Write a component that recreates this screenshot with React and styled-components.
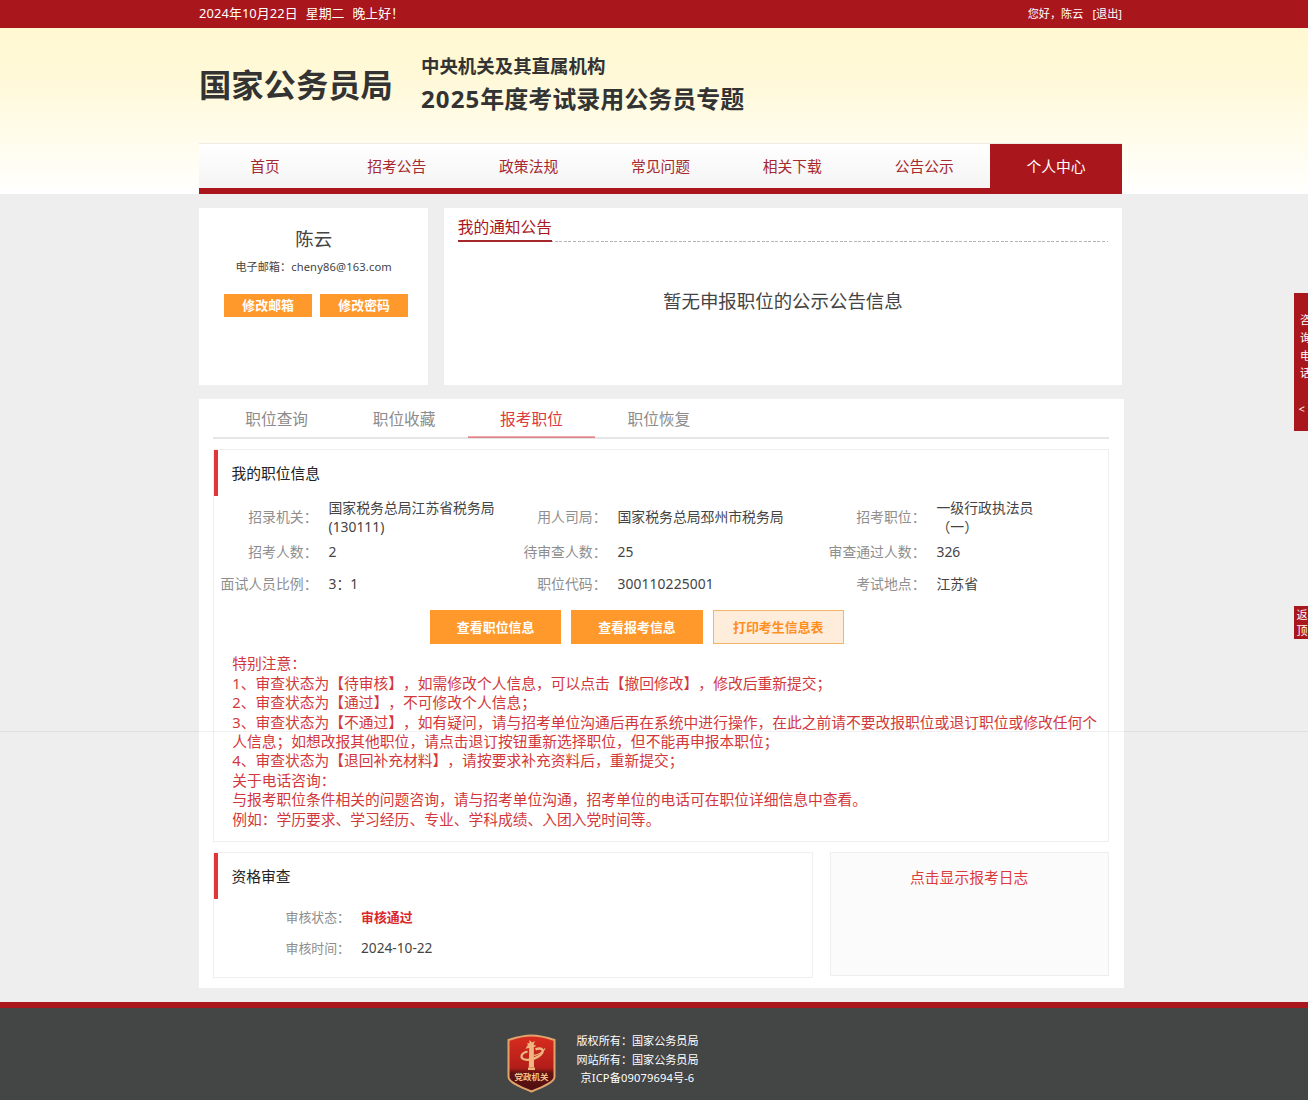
import React from "react";
import styled, { createGlobalStyle, css } from "styled-components";

const red = "#a9161c";
const accent = "#dd3a3d";
const orange = "#ff992b";

const Global = createGlobalStyle`
  * { box-sizing: border-box; }
  body {
    margin: 0;
    background: #eee;
    color: #444;
    font-family: "Noto Sans", "Noto Sans CJK SC", sans-serif;
    font-size: 13.85px;
    text-spacing-trim: space-all;
    overflow: hidden;
  }
`;

const Page = styled.div`
  width: 1308px;
  height: 1100px;
  display: flex;
  flex-direction: column;
  position: relative;
  overflow: hidden;
`;

const Container = styled.div`
  width: 923px;
  margin-left: 199px;
`;

const TopBar = styled.div`
  height: 27.6px;
  flex: none;
  background: ${red};
  color: #fff;
`;

const TopRow = styled(Container)`
  display: flex;
  justify-content: space-between;
  line-height: 26px;
`;

const Today = styled.div`
  display: flex;
  gap: 8px;
  font-size: 12.9px;
`;

const DateText = styled.span`
  letter-spacing: 0.1px;
`;

const Greeting = styled.div`
  display: flex;
  gap: 9px;
  font-size: 11.15px;
  line-height: 28px;
`;

const Header = styled.header`
  height: 166.4px;
  flex: none;
  background: linear-gradient(#fff8d1 0%, #fff9d8 30%, #fffdf0 75%, #fffffe 100%);
`;

const Brand = styled(Container)`
  height: 115.4px;
  display: flex;
  align-items: flex-start;
  color: #333;
  font-weight: 700;
`;

const Bureau = styled.h1`
  margin: 36px 0 0;
  width: 222px;
  font-size: 32.3px;
  line-height: 40px;
`;

const Topic = styled.div`
  padding-top: 26px;
`;

const TopicSmall = styled.div`
  font-size: 18.46px;
  line-height: 24px;
`;

const TopicLarge = styled.div`
  font-size: 24px;
  line-height: 32px;
  margin-top: 5px;
`;

const Year = styled.span`
  letter-spacing: 1.1px;
`;

const Nav = styled(Container)`
  height: 51px;
  display: grid;
  grid-template-columns: repeat(7, 1fr);
  border-top: 1px solid #eeece4;
  border-bottom: 6.4px solid ${red};
  background: linear-gradient(#fff, #f4f4f4);
`;

const NavItem = styled.a`
  height: ${(p) => (p.$active ? "50px" : "43px")};
  text-align: center;
  font-size: 14.77px;
  line-height: 44px;
  color: ${(p) => (p.$active ? "#fff" : "#a5292f")};
  background: ${(p) => (p.$active ? red : "transparent")};
`;

const Cards = styled(Container)`
  display: flex;
  gap: 15.5px;
  margin-top: 14px;
  height: 177px;
  flex: none;
`;

const Card = styled.section`
  background: #fff;
`;

const Profile = styled(Card)`
  width: 229.3px;
  display: flex;
  flex-direction: column;
  align-items: center;
  padding-top: 17px;
`;

const UserName = styled.div`
  font-size: 18.46px;
  line-height: 28px;
`;

const Email = styled.div`
  font-size: 11.15px;
  line-height: 20px;
  margin-top: 4px;
`;

const Address = styled.span`
  letter-spacing: 0.15px;
`;

const SmallActions = styled.div`
  display: flex;
  gap: 8px;
  margin: 17px 0 0 5px;
`;

const SmallButton = styled.button`
  width: 88px;
  height: 23px;
  padding: 0;
  border: 0;
  background: ${orange};
  color: #fff;
  font: 700 12.9px/23px "Noto Sans", "Noto Sans CJK SC", sans-serif;
`;

const Notice = styled(Card)`
  flex: 1;
  padding: 7px 14px 0;
`;

const NoticeHead = styled.div`
  height: 27px;
  background: repeating-linear-gradient(90deg, #b4b4b4 0 3px, #fff 3px 4.6px) 0 26px / 100% 1px no-repeat;
`;

const NoticeTitle = styled.span`
  display: block;
  width: 94px;
  height: 27px;
  white-space: nowrap;
  color: ${red};
  font-size: 15.7px;
  line-height: 25px;
  border-bottom: 2px solid #a5262b;
`;

const NoticeEmpty = styled.div`
  margin-top: 45px;
  text-align: center;
  font-size: 18.46px;
  line-height: 28px;
`;

const Main = styled.main`
  width: 925px;
  height: 589px;
  flex: none;
  margin: 14px 0 0 199px;
  padding: 0 15.5px 0 14px;
  background: #fff;
`;

const Tabs = styled.div`
  display: flex;
  height: 40px;
  border-bottom: 2px solid #e6e6e6;
`;

const Tab = styled.a`
  width: 127.4px;
  height: 39px;
  text-align: center;
  font-size: 15.7px;
  line-height: 41px;
  color: ${(p) => (p.$active ? accent : "#8c8c8c")};
  box-shadow: ${(p) => (p.$active ? "inset 0 -1px #d98488, inset 0 -2px #f3a9ab" : "none")};
`;

const Panel = styled.section`
  border: 1px solid #eee;
  background: #fff;
  height: ${(p) => p.$height}px;
  margin-top: ${(p) => p.$top || 0}px;
  flex: 1;
`;

const PanelTitle = styled.h2`
  margin: 0;
  height: 46px;
  padding-left: 13.5px;
  border-left: 4px solid #e0363b;
  color: #222;
  font-size: 14.77px;
  font-weight: 400;
  line-height: 47px;
`;

const Details = styled.dl`
  margin: 1px 0 0;
  display: grid;
  grid-template-columns: 103.5px 185px 104px 215px 104px 1fr;
  grid-template-rows: 38.5px 31.5px 31.5px;
  align-items: center;
  line-height: 19px;
`;

const Label = styled.dt`
  text-align: right;
  color: #8e8e8e;
  white-space: nowrap;
`;

const Value = styled.dd`
  margin: 0;
  padding-left: 11px;
  white-space: nowrap;
  color: #444;
`;

const Code = styled.span`
  letter-spacing: 0.1px;
`;

const Actions = styled.div`
  display: flex;
  gap: 10px;
  margin: 11.5px 0 0 216px;
`;

const Button = styled.button`
  width: 131.3px;
  height: 34px;
  padding: 0;
  border: 1px solid ${orange};
  font: 700 12.95px/32px "Noto Sans", "Noto Sans CJK SC", sans-serif;
  ${(p) =>
    p.$outline
      ? css`
          background: #ffeddb;
          border-color: #f3b469;
          color: #ff8f1f;
        `
      : css`
          background: ${orange};
          color: #fff;
        `}
`;

const Notes = styled.div`
  margin: 10px 0 0 18.2px;
  width: 870px;
  font-size: 14.77px;
  line-height: 19.42px;
  color: #d2383b;
`;

const Note = styled.p`
  margin: 0;
`;

const Lower = styled.div`
  display: flex;
  align-items: flex-start;
  gap: 17px;
  margin-top: 9.5px;
`;

const Review = styled.dl`
  margin: 2px 0 0;
  display: grid;
  grid-template-columns: 136px 1fr;
  grid-auto-rows: 31px;
  align-items: center;
  font-size: 12.9px;
`;

const Passed = styled.b`
  color: #d9272c;
`;

const Stamp = styled.span`
  font-size: 13.7px;
`;

const Log = styled.section`
  width: 278.7px;
  height: 124px;
  border: 1px solid #eee;
  background: #fbfbfb;
  color: ${accent};
  text-align: center;
  font-size: 14.77px;
  line-height: 48px;
`;

const Footer = styled.footer`
  flex: 1;
  margin-top: 14px;
  border-top: 6px solid ${red};
  background: #444545;
  color: #fff;
  display: flex;
  gap: 20.5px;
  padding: 24.5px 0 0 507px;
`;

const FooterText = styled.div`
  font-size: 11.1px;
  line-height: 18.4px;
`;

const Icp = styled.div`
  padding-left: 4px;
  letter-spacing: 0.15px;
`;

const Emblem = styled.svg`
  width: 49px;
  height: 60px;
  margin-top: 2px;
  display: block;
`;

const SideTab = styled.aside`
  position: absolute;
  right: 0;
  width: 14px;
  overflow: hidden;
  background: ${red};
  color: #fff;
  font-size: 11.1px;
`;

const Hotline = styled(SideTab)`
  top: 293px;
  height: 138px;
  padding: 18px 0 0 6px;
  line-height: 17.8px;
`;

const Chevron = styled.div`
  margin: 18px 0 0 -1.5px;
`;

const BackTop = styled(SideTab)`
  top: 605.5px;
  height: 33.5px;
  padding: 1px 0 0 2.5px;
  line-height: 16px;
`;

const Fold = styled.div`
  position: absolute;
  top: 731px;
  left: 0;
  right: 0;
  height: 1px;
  background: rgba(0, 0, 0, 0.06);
`;

const navItems = ["首页", "招考公告", "政策法规", "常见问题", "相关下载", "公告公示", "个人中心"];
const tabs = ["职位查询", "职位收藏", "报考职位", "职位恢复"];
const details = [
  ["招录机关", <>国家税务总局江苏省税务局<br />(130111)</>],
  ["用人司局", "国家税务总局邳州市税务局"],
  ["招考职位", <>一级行政执法员<br />（一）</>],
  ["招考人数", "2"],
  ["待审查人数", "25"],
  ["审查通过人数", "326"],
  ["面试人员比例", "3：1"],
  ["职位代码", <Code>300110225001</Code>],
  ["考试地点", "江苏省"],
];
const notes = [
  "特别注意：",
  "1、审查状态为【待审核】，如需修改个人信息，可以点击【撤回修改】，修改后重新提交；",
  "2、审查状态为【通过】，不可修改个人信息；",
  "3、审查状态为【不通过】，如有疑问，请与招考单位沟通后再在系统中进行操作，在此之前请不要改报职位或退订职位或修改任何个人信息；如想改报其他职位，请点击退订按钮重新选择职位，但不能再申报本职位；",
  "4、审查状态为【退回补充材料】，请按要求补充资料后，重新提交；",
  "关于电话咨询：",
  "与报考职位条件相关的问题咨询，请与招考单位沟通，招考单位的电话可在职位详细信息中查看。",
  "例如：学历要求、学习经历、专业、学科成绩、入团入党时间等。",
];

function Shield() {
  return (
    <Emblem viewBox="0 0 49 60">
      <defs>
        <linearGradient id="shield" x1="0" y1="0" x2="0" y2="1">
          <stop offset="0" stopColor="#d92d1e" />
          <stop offset="0.58" stopColor="#b21d19" />
          <stop offset="0.66" stopColor="#651313" />
          <stop offset="1" stopColor="#4c0f10" />
        </linearGradient>
      </defs>
      <path
        d="M24.5 1.5C30 1.5 40 3.5 47.5 6V43C47.5 48 36 53 24.5 57.5C13 53 1.5 48 1.5 43V6C9 3.5 19 1.5 24.5 1.5Z"
        fill="url(#shield)"
        stroke="#dfa36c"
        strokeWidth="2"
      />
      <g fill="#edb77f">
        <path d="M22.500 6l2.500 2.500 3-1.500-1.500 3.500 3 1.500-2.700 1 .2 20.500h-5.200l.4-19.500-3.800.8 2.600-4-1.200-1.300 2.500-.3z" />
        <path d="M21 33.500h7v2.500h-7z" />
      </g>
      <path d="M20.500 17.500C12.500 19.500 12.500 26 20.500 25.800C29 25.500 37 20 35.500 16C34.500 14 31 14.200 28.500 15.500" fill="none" stroke="#edb77f" strokeWidth="2.300" />
      <path d="M27 21.500C32 20.500 36 18 38 14.500" fill="none" stroke="#edb77f" strokeWidth="1.300" />
      <text x="24.500" y="46.300" textAnchor="middle" fontSize="8.500" fontWeight="700" fill="#f2c28b" fontFamily="'Noto Sans CJK SC', sans-serif">
        党政机关
      </text>
    </Emblem>
  );
}

export default function App() {
  return (
    <Page>
      <Global />
      <TopBar>
        <TopRow>
          <Today>
            <DateText>2024年10月22日</DateText>
            <span>星期二</span>
            <span>晚上好！</span>
          </Today>
          <Greeting>
            <span>您好，陈云</span>
            <span>[退出]</span>
          </Greeting>
        </TopRow>
      </TopBar>
      <Header>
        <Brand>
          <Bureau>国家公务员局</Bureau>
          <Topic>
            <TopicSmall>中央机关及其直属机构</TopicSmall>
            <TopicLarge><Year>2025</Year>年度考试录用公务员专题</TopicLarge>
          </Topic>
        </Brand>
        <Nav as="nav">
          {navItems.map((t) => (
            <NavItem key={t} $active={t === "个人中心"}>{t}</NavItem>
          ))}
        </Nav>
      </Header>
      <Cards>
        <Profile>
          <UserName>陈云</UserName>
          <Email>电子邮箱：<Address>cheny86@163.com</Address></Email>
          <SmallActions>
            <SmallButton>修改邮箱</SmallButton>
            <SmallButton>修改密码</SmallButton>
          </SmallActions>
        </Profile>
        <Notice>
          <NoticeHead>
            <NoticeTitle>我的通知公告</NoticeTitle>
          </NoticeHead>
          <NoticeEmpty>暂无申报职位的公示公告信息</NoticeEmpty>
        </Notice>
      </Cards>
      <Main>
        <Tabs>
          {tabs.map((t) => (
            <Tab key={t} $active={t === "报考职位"}>{t}</Tab>
          ))}
        </Tabs>
        <Panel $height={393} $top={10.4}>
          <PanelTitle>我的职位信息</PanelTitle>
          <Details>
            {details.map(([k, v]) => (
              <React.Fragment key={k}>
                <Label>{k}：</Label>
                <Value>{v}</Value>
              </React.Fragment>
            ))}
          </Details>
          <Actions>
            <Button>查看职位信息</Button>
            <Button>查看报考信息</Button>
            <Button $outline>打印考生信息表</Button>
          </Actions>
          <Notes>
            {notes.map((n) => (
              <Note key={n}>{n}</Note>
            ))}
          </Notes>
        </Panel>
        <Lower>
          <Panel $height={126}>
            <PanelTitle>资格审查</PanelTitle>
            <Review>
              <Label>审核状态：</Label>
              <Value><Passed>审核通过</Passed></Value>
              <Label>审核时间：</Label>
              <Value><Stamp>2024-10-22</Stamp></Value>
            </Review>
          </Panel>
          <Log>点击显示报考日志</Log>
        </Lower>
      </Main>
      <Footer>
        <Shield />
        <FooterText>
          <div>版权所有：国家公务员局</div>
          <div>网站所有：国家公务员局</div>
          <Icp>京ICP备09079694号-6</Icp>
        </FooterText>
      </Footer>
      <Hotline>
        <div>咨</div>
        <div>询</div>
        <div>电</div>
        <div>话</div>
        <Chevron>&lt;</Chevron>
      </Hotline>
      <BackTop>
        <div>返</div>
        <div>顶</div>
      </BackTop>
      <Fold />
    </Page>
  );
}
